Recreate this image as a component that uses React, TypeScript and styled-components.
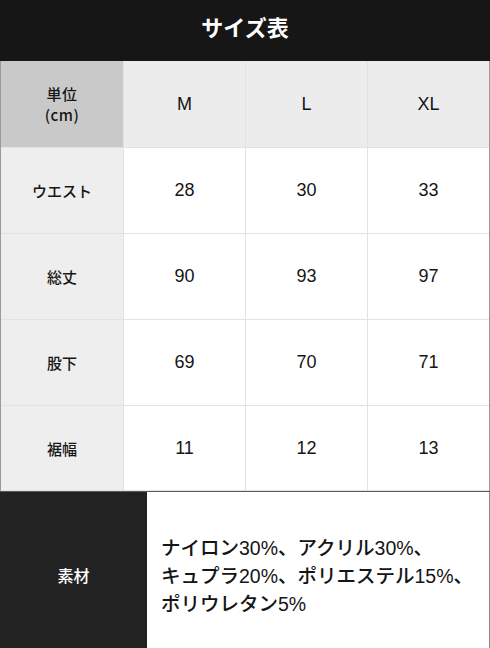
import { Fragment } from "react";
import styled, { createGlobalStyle } from "styled-components";

const GlobalStyle = createGlobalStyle`
  body {
    margin: 0;
    background: #ffffff;
    font-family: "Liberation Sans", "Noto Sans CJK JP", sans-serif;
    color: #111;
  }
`;

const Page = styled.div`
  width: 490px;
  display: flex;
  flex-direction: column;
`;

const TitleBar = styled.div`
  height: 61px;
  background: #161616;
  color: #fff;
  display: flex;
  align-items: center;
  justify-content: center;
  font-family: "Noto Sans CJK JP", sans-serif;
  font-weight: 700;
  font-size: 22px;
  padding-bottom: 9px;
  box-sizing: border-box;
`;

const Table = styled.div`
  display: grid;
  grid-template-columns: 122px 121px 121px 1fr;
  grid-template-rows: 86px 85px 85px 85px 84px;
  gap: 1px;
  background: #e2e2e2;
  border-left: 1px solid #9a9a9a;
  border-right: 1px solid #9a9a9a;
  padding-bottom: 1px;
`;

interface CellProps {
  $kind: "corner" | "size" | "label" | "value";
}

const bgFor = {
  corner: "#c9c9c9",
  size: "#ececec",
  label: "#eeeeee",
  value: "#ffffff",
};

const Cell = styled.div<CellProps>`
  background: ${({ $kind }) => bgFor[$kind]};
  display: flex;
  align-items: center;
  justify-content: center;
  text-align: center;
  font-family: ${({ $kind }) =>
    $kind === "label" || $kind === "corner"
      ? `"Noto Sans CJK JP", sans-serif`
      : `"Liberation Sans", "Noto Sans CJK JP", sans-serif`};
  font-size: ${({ $kind }) =>
    $kind === "label" || $kind === "corner" ? "15px" : "18px"};
  font-weight: ${({ $kind }) =>
    $kind === "label" || $kind === "corner" ? 500 : 400};
  line-height: 21px;
  letter-spacing: ${({ $kind }) => ($kind === "corner" ? "0.5px" : "0")};
  color: #151515;
`;

const Material = styled.div`
  display: grid;
  grid-template-columns: 147px 1fr;
  height: 158px;
  border-top: 1px solid #5a5a5a;
  border-bottom: 1px solid #8a8a8a;
  box-sizing: border-box;
`;

const MaterialLabel = styled.div`
  background: #222222;
  color: #fff;
  display: flex;
  align-items: center;
  justify-content: center;
  padding-top: 10px;
  font-family: "Noto Sans CJK JP", sans-serif;
  font-weight: 500;
  font-size: 16px;
`;

const MaterialText = styled.div`
  border-right: 1px solid #8a8a8a;
  display: flex;
  align-items: center;
  padding: 12px 10px 0 14px;
  font-family: "Liberation Sans", "Noto Sans CJK JP", sans-serif;
  font-weight: 500;
  font-size: 19.5px;
  line-height: 28px;
  color: #151515;
`;

const sizes = ["M", "L", "XL"];

const rows: { label: string; values: string[] }[] = [
  { label: "ウエスト", values: ["28", "30", "33"] },
  { label: "総丈", values: ["90", "93", "97"] },
  { label: "股下", values: ["69", "70", "71"] },
  { label: "裾幅", values: ["11", "12", "13"] },
];

export default function App() {
  return (
    <Page>
      <GlobalStyle />
      <TitleBar>サイズ表</TitleBar>
      <Table>
        <Cell $kind="corner">
          単位
          <br />
          (cm)
        </Cell>
        {sizes.map((s) => (
          <Cell key={s} $kind="size">
            {s}
          </Cell>
        ))}
        {rows.map((r) => (
          <Fragment key={r.label}>
            <Cell $kind="label">{r.label}</Cell>
            {r.values.map((v, i) => (
              <Cell key={i} $kind="value">
                {v}
              </Cell>
            ))}
          </Fragment>
        ))}
      </Table>
      <Material>
        <MaterialLabel>素材</MaterialLabel>
        <MaterialText>
          ナイロン30%、アクリル30%、
          <br />
          キュプラ20%、ポリエステル15%、
          <br />
          ポリウレタン5%
        </MaterialText>
      </Material>
    </Page>
  );
}
